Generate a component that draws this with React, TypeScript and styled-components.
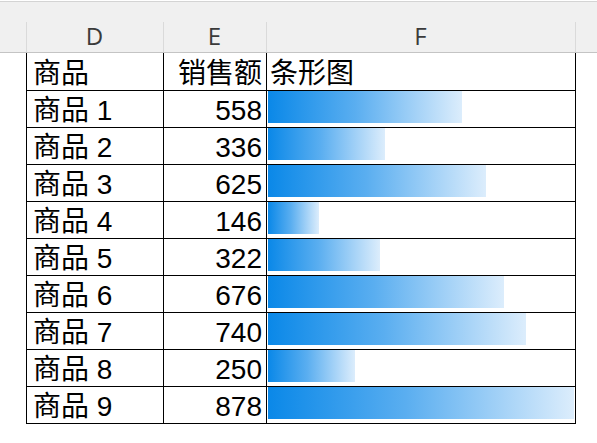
import React from "react";
import styled, { createGlobalStyle } from "styled-components";

const GlobalStyle = createGlobalStyle`
    html, body {
        margin: 0;
        padding: 0;
        background: #fff;
    }
    body {
        font-family: "Liberation Sans", "Noto Sans CJK SC", sans-serif;
    }
`;

const rows = [
    { name: "商品 1", sales: 558 },
    { name: "商品 2", sales: 336 },
    { name: "商品 3", sales: 625 },
    { name: "商品 4", sales: 146 },
    { name: "商品 5", sales: 322 },
    { name: "商品 6", sales: 676 },
    { name: "商品 7", sales: 740 },
    { name: "商品 8", sales: 250 },
    { name: "商品 9", sales: 878 },
];

const MAX = 878;
const BAR_FULL = 306;

export default function App() {
    return (
        <>
            <GlobalStyle />
            <Sheet>
                <ColumnBar>
                    <Corner />
                    <ColHead $w={137}>D</ColHead>
                    <ColHead $w={103}>E</ColHead>
                    <ColHead $w={309}>F</ColHead>
                    <ColHead $w={22} />
                </ColumnBar>
                <Grid>
                    <colgroup>
                        <col style={{ width: 137 }} />
                        <col style={{ width: 103 }} />
                        <col style={{ width: 309 }} />
                    </colgroup>
                    <tbody>
                        <Row>
                            <TextCell>商品</TextCell>
                            <NumCell>销售额</NumCell>
                            <TextCell $tight>条形图</TextCell>
                        </Row>
                        {rows.map((r) => (
                            <Row key={r.name}>
                                <TextCell>{r.name}</TextCell>
                                <NumCell>{r.sales}</NumCell>
                                <BarCell>
                                    <Bar
                                        style={{
                                            width: Math.round(
                                                (r.sales / MAX) * BAR_FULL
                                            ),
                                        }}
                                    />
                                </BarCell>
                            </Row>
                        ))}
                    </tbody>
                </Grid>
            </Sheet>
        </>
    );
}

const Sheet = styled.div`
    width: 597px;
    height: 443px;
    padding-top: 1px;
    box-sizing: border-box;
    overflow: hidden;
`;

const ColumnBar = styled.div`
    display: flex;
    height: 50px;
    background: #f0f0f0;
    border-top: 1px solid #d4d4d4;
    border-bottom: 1px solid #c4c4c4;
`;

const Corner = styled.div`
    width: 26px;
    flex: none;
`;

const ColHead = styled.div<{ $w: number }>`
    position: relative;
    width: ${(p) => p.$w}px;
    flex: none;
    display: flex;
    align-items: center;
    justify-content: center;
    padding-top: 17px;
    box-sizing: border-box;
    font-family: "Open Sans", "Liberation Sans", sans-serif;
    font-size: 24px;
    color: #3a3a3a;

    &::before {
        content: "";
        position: absolute;
        left: 0;
        top: 20px;
        bottom: 0;
        border-left: 1px solid #dadada;
    }
`;

const Grid = styled.table`
    margin-left: 26px;
    border-collapse: collapse;
    table-layout: fixed;
    width: 549px;

    td {
        border: 1px solid #000;
        padding: 0;
        font-size: 28px;
        line-height: 30px;
        color: #000;
        vertical-align: bottom;
        white-space: nowrap;
        overflow: hidden;
    }

    tr:first-child td {
        border-top: none;
    }
`;

const Row = styled.tr`
    height: 37px;
`;

const TextCell = styled.td<{ $tight?: boolean }>`
    && {
        padding: 0 0 1px ${(p) => (p.$tight ? 3 : 6)}px;
        text-align: left;
    }
`;

const NumCell = styled.td`
    && {
        padding: 0 4px 1px 0;
        text-align: right;
    }
`;

const BarCell = styled.td`
    && {
        padding: 0 0 3px 1px;
        vertical-align: top;
    }
`;

const Bar = styled.div`
    height: 32px;
    background: linear-gradient(to right, #0a88e8, #5aaef0 45%, #dcedfc);
`;
